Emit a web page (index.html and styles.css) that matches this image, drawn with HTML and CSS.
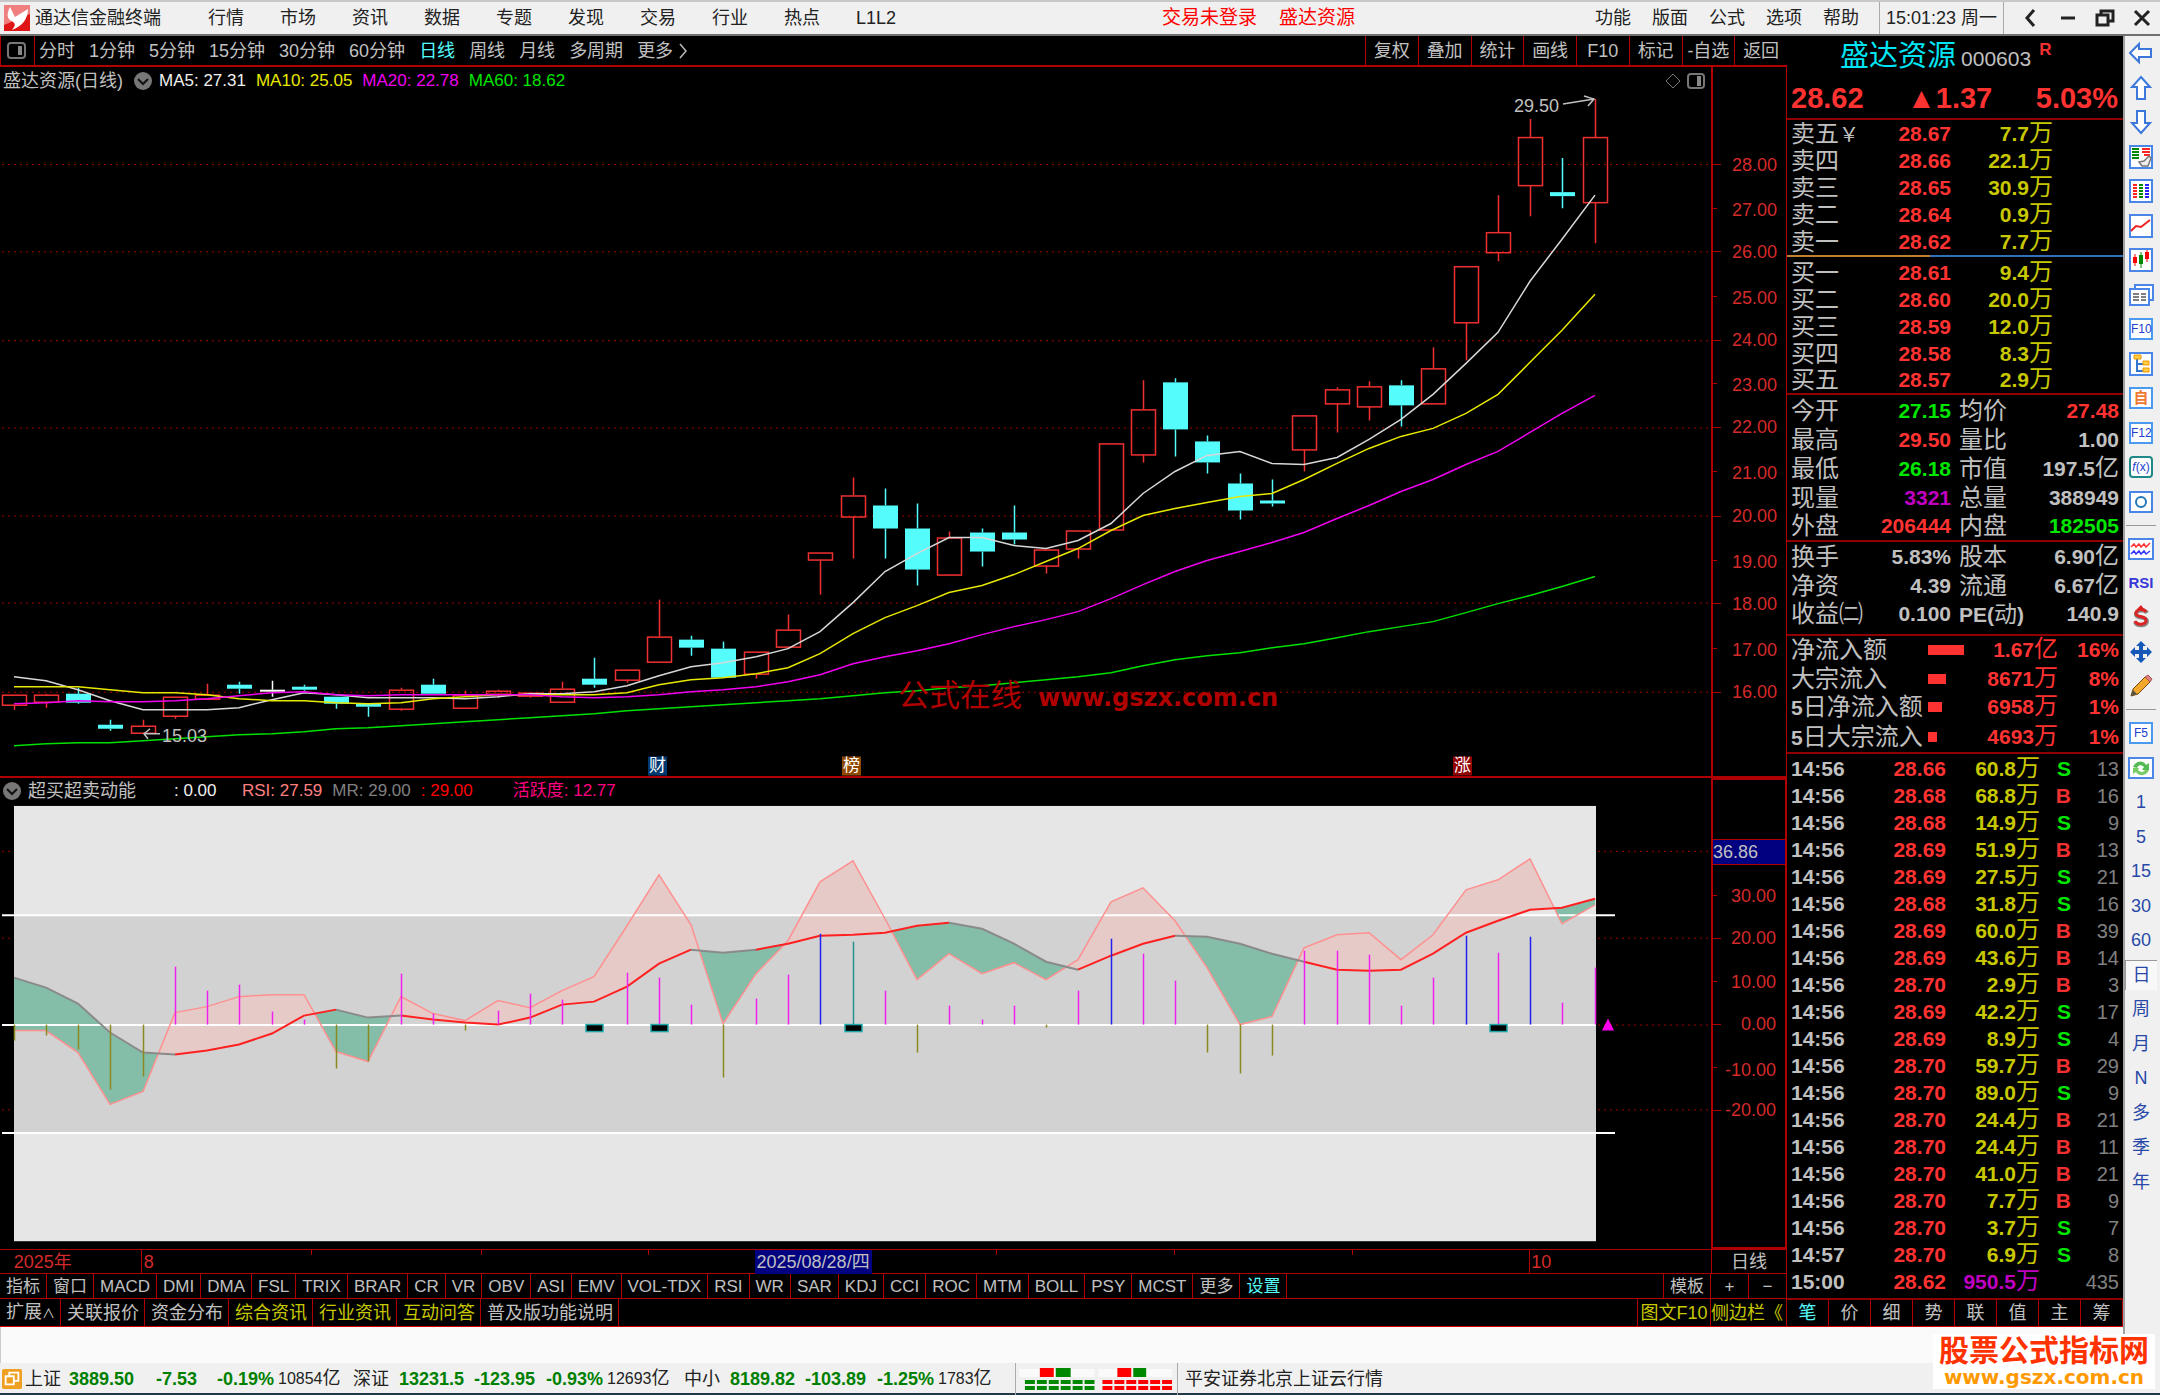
FILE: index.html
```html
<!DOCTYPE html>
<html lang="zh-CN">
<head>
<meta charset="utf-8">
<title>通达信金融终端</title>
<link rel="stylesheet" href="styles.css">
</head>
<body>
<div class="app">
  <header class="titlebar">
    <svg class="logo" viewBox="0 0 26 26"><rect width="26" height="26" fill="#e01515"/><path d="M0 0H26V9L0 20Z" fill="#f08080"/><path d="M6 2L11 12L24 4C24 13 19 21 8 25C12 20 12 18 6 15C2 12 4 6 6 2Z" fill="#fff"/></svg>
    <span class="app-name">通达信金融终端</span>
    <nav class="menu">
      <button>行情</button><button>市场</button><button>资讯</button><button>数据</button><button>专题</button><button>发现</button><button>交易</button><button>行业</button><button>热点</button><button>L1L2</button>
    </nav>
    <div class="account"><a href="#login">交易未登录</a><a href="#stock">盛达资源</a></div>
    <nav class="menu menu-right">
      <button>功能</button><button>版面</button><button>公式</button><button>选项</button><button>帮助</button>
    </nav>
    <time class="clock">15:01:23 周一</time>
    <div class="win">
      <button aria-label="返回"><svg viewBox="0 0 20 20"><path d="M13 2L6 10L13 18"/></svg></button>
      <button aria-label="最小化"><svg viewBox="0 0 20 20"><path d="M3 10H17"/></svg></button>
      <button aria-label="还原"><svg viewBox="0 0 20 20"><path d="M2 7H13V17H2ZM6 7V3H18V13H13"/></svg></button>
      <button aria-label="关闭"><svg viewBox="0 0 20 20"><path d="M3 3L17 17M17 3L3 17"/></svg></button>
    </div>
  </header>

  <main class="workspace">
    <div class="toolbar">
      <button class="layout-btn" aria-label="布局"><svg viewBox="0 0 20 18"><rect x="1" y="1" width="17" height="15" rx="3" fill="none" stroke="#777" stroke-width="2"/><rect x="11" y="4" width="4" height="9" fill="#888"/></svg></button>
      <div class="periods">
        <button>分时</button><button>1分钟</button><button>5分钟</button><button>15分钟</button><button>30分钟</button><button>60分钟</button><button class="on">日线</button><button>周线</button><button>月线</button><button>多周期</button><button class="more">更多<svg viewBox="0 0 10 16"><path d="M2 1L8 8L2 15" fill="none" stroke="#bbb" stroke-width="1.5"/></svg></button>
      </div>
      <div class="tools">
        <button>复权</button><button>叠加</button><button>统计</button><button>画线</button><button>F10</button><button>标记</button><button>-自选</button><button>返回</button>
      </div>
    </div>

    <section class="pane price">
      <div class="plot">
        <svg id="price" viewBox="0 67 1711 708" preserveAspectRatio="none"></svg>
        <div class="legend">
          <span class="name">盛达资源(日线)</span>
          <svg class="drop" viewBox="0 0 20 20"><circle cx="10" cy="10" r="9" fill="#777"/><path d="M5 8L10 13L15 8" fill="none" stroke="#111" stroke-width="2"/></svg>
          <span class="c-white">MA5: 27.31</span><span class="c-yellow">MA10: 25.05</span><span class="c-mag">MA20: 22.78</span><span class="c-green">MA60: 18.62</span>
          <svg class="corner" viewBox="0 0 42 18"><path d="M1 9L8 2L15 9L8 16Z" fill="none" stroke="#777"/><rect x="23" y="2" width="16" height="14" rx="3" fill="none" stroke="#777" stroke-width="2"/><rect x="32" y="4" width="4" height="10" fill="#888"/></svg>
        </div>
        <div id="price-notes"></div>
      </div>
      <div class="axis" id="price-axis"></div>
    </section>

    <section class="pane indicator">
      <div class="plot">
        <svg id="indicator" viewBox="0 777 1711 472" preserveAspectRatio="none"></svg>
        <div class="legend">
          <svg class="drop" viewBox="0 0 20 20"><circle cx="10" cy="10" r="9" fill="#777"/><path d="M5 8L10 13L15 8" fill="none" stroke="#111" stroke-width="2"/></svg>
          <span class="name ind-name">超买超卖动能</span><span class="c-white ind-zero">: 0.00</span><span class="c-pink">RSI: 27.59</span><span class="c-gray">MR: 29.00</span><span class="c-red ind-mr">: 29.00</span><span class="c-rose">活跃度: 12.77</span>
        </div>
      </div>
      <div class="axis framed" id="indicator-axis"></div>
    </section>

    <div class="dates">
      <div class="date-line">
        <svg viewBox="0 0 1711 24" preserveAspectRatio="none"><path d="M141.500 0V24M1529.500 0V24M311.500 0V5M481.500 0V5M648.500 0V5M996.500 0V5M1174.500 0V5M1352.500 0V5" stroke="#b00000"/></svg>
        <span style="left:0.8%">2025年</span><span style="left:8.400%">8</span><span class="cursor-date" style="left:44.100%">2025/08/28/四</span><span style="left:89.500%">10</span>
      </div>
      <div class="date-period">日线</div>
    </div>

    <div class="tabs inds">
      <button>指标</button><button>窗口</button><button>MACD</button><button>DMI</button><button>DMA</button><button>FSL</button><button>TRIX</button><button>BRAR</button><button>CR</button><button>VR</button><button>OBV</button><button>ASI</button><button>EMV</button><button>VOL-TDX</button><button>RSI</button><button>WR</button><button>SAR</button><button>KDJ</button><button>CCI</button><button>ROC</button><button>MTM</button><button>BOLL</button><button>PSY</button><button>MCST</button><button>更多</button><button class="on">设置</button>
      <span class="fill"></span>
      <button class="first">模板</button><button class="half">+</button><button class="half last">−</button>
    </div>
    <div class="tabs exts">
      <button>扩展<small>∧</small></button><button>关联报价</button><button>资金分布</button><button class="y">综合资讯</button><button class="y">行业资讯</button><button class="y">互动问答</button><button>普及版功能说明</button>
      <span class="fill"></span>
      <button class="first y f10">图文F10</button><button class="y side">侧边栏《</button>
    </div>
  </main>

  <aside class="quote">
    <div class="q-head">
      <h1>盛达资源 <small>000603</small><sup>R</sup></h1>
      <div class="q-price"><span>28.62</span><span>▲1.37</span><span>5.03%</span></div>
    </div>
    <table class="book asks">
      <tr><th>卖五<i>￥</i></th><td>28.67</td><td>7.7<b>万</b></td></tr>
      <tr><th>卖四</th><td>28.66</td><td>22.1<b>万</b></td></tr>
      <tr><th>卖三</th><td>28.65</td><td>30.9<b>万</b></td></tr>
      <tr><th>卖二</th><td>28.64</td><td>0.9<b>万</b></td></tr>
      <tr><th>卖一</th><td>28.62</td><td>7.7<b>万</b></td></tr>
    </table>
    <div class="ratio"></div>
    <table class="book bids">
      <tr><th>买一</th><td>28.61</td><td>9.4<b>万</b></td></tr>
      <tr><th>买二</th><td>28.60</td><td>20.0<b>万</b></td></tr>
      <tr><th>买三</th><td>28.59</td><td>12.0<b>万</b></td></tr>
      <tr><th>买四</th><td>28.58</td><td>8.3<b>万</b></td></tr>
      <tr><th>买五</th><td>28.57</td><td>2.9<b>万</b></td></tr>
    </table>
    <table class="stats s5">
      <tr><th>今开</th><td class="g">27.15</td><th>均价</th><td class="r">27.48</td></tr>
      <tr><th>最高</th><td class="r">29.50</td><th>量比</th><td>1.00</td></tr>
      <tr><th>最低</th><td class="g">26.18</td><th>市值</th><td>197.5<b>亿</b></td></tr>
      <tr><th>现量</th><td class="m">3321</td><th>总量</th><td>388949</td></tr>
      <tr><th>外盘</th><td class="r">206444</td><th>内盘</th><td class="g">182505</td></tr>
    </table>
    <table class="stats s3">
      <tr><th>换手</th><td>5.83%</td><th>股本</th><td>6.90<b>亿</b></td></tr>
      <tr><th>净资</th><td>4.39</td><th>流通</th><td>6.67<b>亿</b></td></tr>
      <tr><th>收益㈡</th><td>0.100</td><th class="pe"><span>PE(</span>动<span>)</span></th><td>140.9</td></tr>
    </table>
    <table class="flow">
      <tr><th>净流入额</th><td><span class="bar" style="width:36px"></span></td><td>1.67<b>亿</b></td><td>16%</td></tr>
      <tr><th>大宗流入</th><td><span class="bar" style="width:18px"></span></td><td>8671<b>万</b></td><td>8%</td></tr>
      <tr><th><span>5</span>日净流入额</th><td><span class="bar" style="width:14px"></span></td><td>6958<b>万</b></td><td>1%</td></tr>
      <tr><th><span>5</span>日大宗流入</th><td><span class="bar" style="width:9px"></span></td><td>4693<b>万</b></td><td>1%</td></tr>
    </table>
    <table class="ticks">
      <tr><td>14:56</td><td>28.66</td><td>60.8<b>万</b></td><td class="s">S</td><td>13</td></tr>
      <tr><td>14:56</td><td>28.68</td><td>68.8<b>万</b></td><td>B</td><td>16</td></tr>
      <tr><td>14:56</td><td>28.68</td><td>14.9<b>万</b></td><td class="s">S</td><td>9</td></tr>
      <tr><td>14:56</td><td>28.69</td><td>51.9<b>万</b></td><td>B</td><td>13</td></tr>
      <tr><td>14:56</td><td>28.69</td><td>27.5<b>万</b></td><td class="s">S</td><td>21</td></tr>
      <tr><td>14:56</td><td>28.68</td><td>31.8<b>万</b></td><td class="s">S</td><td>16</td></tr>
      <tr><td>14:56</td><td>28.69</td><td>60.0<b>万</b></td><td>B</td><td>39</td></tr>
      <tr><td>14:56</td><td>28.69</td><td>43.6<b>万</b></td><td>B</td><td>14</td></tr>
      <tr><td>14:56</td><td>28.70</td><td>2.9<b>万</b></td><td>B</td><td>3</td></tr>
      <tr><td>14:56</td><td>28.69</td><td>42.2<b>万</b></td><td class="s">S</td><td>17</td></tr>
      <tr><td>14:56</td><td>28.69</td><td>8.9<b>万</b></td><td class="s">S</td><td>4</td></tr>
      <tr><td>14:56</td><td>28.70</td><td>59.7<b>万</b></td><td>B</td><td>29</td></tr>
      <tr><td>14:56</td><td>28.70</td><td>89.0<b>万</b></td><td class="s">S</td><td>9</td></tr>
      <tr><td>14:56</td><td>28.70</td><td>24.4<b>万</b></td><td>B</td><td>21</td></tr>
      <tr><td>14:56</td><td>28.70</td><td>24.4<b>万</b></td><td>B</td><td>11</td></tr>
      <tr><td>14:56</td><td>28.70</td><td>41.0<b>万</b></td><td>B</td><td>21</td></tr>
      <tr><td>14:56</td><td>28.70</td><td>7.7<b>万</b></td><td>B</td><td>9</td></tr>
      <tr><td>14:56</td><td>28.70</td><td>3.7<b>万</b></td><td class="s">S</td><td>7</td></tr>
      <tr><td>14:57</td><td>28.70</td><td>6.9<b>万</b></td><td class="s">S</td><td>8</td></tr>
      <tr><td>15:00</td><td>28.62</td><td class="m">950.5<b>万</b></td><td></td><td>435</td></tr>
    </table>
    <nav class="q-tabs"><button class="on">笔</button><button>价</button><button>细</button><button>势</button><button>联</button><button>值</button><button>主</button><button>筹</button></nav>
  </aside>

  <aside class="rail">
    <div class="rail-top">
      <button aria-label="后退"><svg viewBox="0 0 26 26"><path class="arrow" d="M2 13L11 4V9H23V17H11V22Z"/></svg></button>
      <button aria-label="上移"><svg viewBox="0 0 26 26"><path class="arrow" d="M13 2L22 12H17V24H9V12H4Z"/></svg></button>
      <button aria-label="下移"><svg viewBox="0 0 26 26"><path class="arrow" d="M13 24L22 14H17V2H9V14H4Z"/></svg></button>
      <button aria-label="委托"><svg viewBox="0 0 26 26"><rect class="box" x="2" y="2" width="22" height="22"/><path d="M4 5H11M4 8H11M4 11H11M4 14H11" stroke="#080" stroke-width="2"/><path d="M14 5H22M14 8H22M16 11H22" stroke="#f22" stroke-width="2"/><path d="M11 18L14 22H20L23 14L21 12L18 15L16 17Z" fill="#eee" stroke="#777" stroke-width="1.5"/></svg></button>
      <button aria-label="列表"><svg viewBox="0 0 26 26"><rect class="box" x="2" y="2" width="22" height="22"/><g stroke-width="4" stroke-dasharray="2 1"><path d="M7 6V21" stroke="#f22"/><path d="M13 6V21" stroke="#080"/><path d="M19 6V21" stroke="#22f"/></g></svg></button>
      <button aria-label="分时"><svg viewBox="0 0 26 26"><rect class="box" x="2" y="2" width="22" height="22"/><path d="M3 18L8 13L13 14L22 7" fill="none" stroke="#e22" stroke-width="2"/></svg></button>
      <button aria-label="K线"><svg viewBox="0 0 26 26"><rect class="box" x="2" y="2" width="22" height="22"/><path d="M7 7V19M19 3V15" stroke="#f00"/><path d="M13 5V21" stroke="#080"/><path d="M5 10H9V16H5ZM17 5H21V12H17Z" fill="#f00"/><path d="M11 8H15V17H11Z" fill="#080"/></svg></button>
      <button aria-label="资讯"><svg viewBox="0 0 26 26"><path class="box" d="M7 3H25V18H7Z"/><path class="box" d="M2 7H21V23H2Z"/><path d="M5 12H11M5 15H11M5 18H11M13 12H18M13 15H18M13 18H18" stroke="#555" stroke-width="1.500"/></svg></button>
      <button class="key">F10</button>
      <button aria-label="板块"><svg viewBox="0 0 26 26"><rect class="box" x="2" y="2" width="22" height="22"/><path d="M9 8V20H15M9 13H15" fill="none" stroke="#37c" stroke-width="2"/><path d="M6 4H13V8H6ZM15 10H21V14H15ZM15 17H21V21H15Z" fill="#fc4" stroke="#e90"/></svg></button>
      <button class="key own">自</button>
      <button class="key">F12</button>
      <button class="key fx"><em>f</em>(x)</button>
      <button aria-label="选项"><svg viewBox="0 0 26 26"><rect class="box" x="2" y="3" width="22" height="20"/><circle cx="13" cy="13" r="5" fill="none" stroke="#27b" stroke-width="2"/></svg></button>
    </div>
    <hr>
    <div class="rail-mid">
      <button aria-label="叠加"><svg viewBox="0 0 26 26"><rect class="box" x="1" y="3" width="24" height="20"/><g fill="none" stroke-width="1.500"><path d="M3 11L6 8L8 11L11 8L13 11L16 8L18 11L22 7" stroke="#f33"/><path d="M3 18L6 15L8 18L11 15L13 18L16 15L18 18L22 15" stroke="#33f"/></g></svg></button>
      <button class="rsi">RSI</button>
      <button aria-label="资金"><svg viewBox="0 0 26 26"><path d="M19 9C17 5 7 6 8 11C9 15 18 12 19 17C20 22 9 23 7 18M13 3V6" fill="none" stroke="#888" stroke-width="4"/><path d="M18 8C16 4 7 5 8 10C9 14 17 11 18 16C19 21 9 22 7 17" fill="none" stroke="#d22" stroke-width="3"/><path d="M9 5L13 1L16 5Z" fill="#d22"/></svg></button>
      <button aria-label="移动"><svg viewBox="0 0 26 26"><path d="M13 2L18 7H15V11H19V8L24 13L19 18V15H15V19H18L13 24L8 19H11V15H7V18L2 13L7 8V11H11V7H8Z" fill="#1558b8"/></svg></button>
      <button aria-label="画笔"><svg viewBox="0 0 26 26"><path d="M3 23L5 16L17 4L22 9L10 21Z" fill="#f3a82a" stroke="#7a4a10"/><path d="M17 4L20 2L24 6L22 9Z" fill="#e08080" stroke="#a55"/><path d="M3 23L5 17L9 21Z" fill="#554"/></svg></button>
    </div>
    <hr>
    <div class="rail-low">
      <button class="key">F5</button>
      <button aria-label="刷新"><svg viewBox="0 0 26 26"><rect class="box" x="1" y="3" width="24" height="20"/><path d="M5 12C8 5 16 5 18 10L21 8V15H14L16 12C13 9 10 10 9 13Z" fill="#5b5"/><path d="M21 15C18 22 10 21 8 17L5 19V13H11L10 15C13 18 16 17 17 15Z" fill="#7c6"/></svg></button>
      <button>1</button><button>5</button><button>15</button><button>30</button><button>60</button><button class="pressed">日</button><button>周</button><button>月</button><button>N</button><button>多</button><button>季</button><button>年</button>
    </div>
  </aside>

  <div class="dock"></div>

  <footer class="status">
    <svg class="st-icon" viewBox="0 0 22 22"><rect width="22" height="22" rx="2" fill="#f0a020"/><path d="M4 8H13V17H4ZM8 8V4H18V13H13" fill="none" stroke="#fff" stroke-width="2"/></svg>
    <div class="index i1"><span>上证</span><b>3889.50</b><b>-7.53</b><b>-0.19%</b><span class="amt">10854<i>亿</i></span></div>
    <div class="index i2"><span>深证</span><b>13231.5</b><b>-123.95</b><b>-0.93%</b><span class="amt">12693<i>亿</i></span></div>
    <div class="index i2"><span>中小</span><b>8189.82</b><b>-103.89</b><b>-1.25%</b><span class="amt">1783<i>亿</i></span></div>
    <svg class="heat" viewBox="0 0 160 28"><path d="M2 4H78V12H2ZM82 4H156V12H82Z" fill="#fafafa"/><path d="M23 3H37V12H23ZM101 3H115V12H101Z" fill="#f00"/><path d="M39 3H54V12H39ZM117 3H130V12H117Z" fill="#080"/><path d="M8 17H78M8 23H78" stroke="#080" stroke-width="4" stroke-dasharray="10 2"/><path d="M86 17H156M86 23H156" stroke="#f00" stroke-width="4" stroke-dasharray="10 2"/></svg>
    <span class="server">平安证券北京上证云行情</span>
  </footer>

  <a class="brand" href="#site"><strong>股票公式指标网</strong><span>www.gszx.com.cn</span></a>
</div>
<script src="charts.js"></script>
</body>
</html>
```
FILE: styles.css
```css
* { box-sizing: border-box; }
body {
  margin: 0;
  background: #f0f0f0;
  color: #c0c0c0;
  font: 18px/24px "Liberation Sans", "Noto Sans CJK SC", sans-serif;
}
button {
  padding: 0;
  border: 0;
  background: none;
  color: inherit;
  font: inherit;
  white-space: nowrap;
}
a { text-decoration: none; }
svg { display: block; }
.app {
  position: relative;
  display: grid;
  grid-template: 36px minmax(1291px, 1fr) 36px 32px / minmax(0, 1fr) 336px 37px;
  min-height: 100vh;
}

.titlebar {
  grid-column: 1 / -1;
  display: flex;
  align-items: center;
  padding: 0 8px 1px 4px;
  border-top: 2px solid #c8c8c8;
  border-bottom: 2px solid #707070;
  background: #f0f0f0;
  color: #222;
}
.logo { width: 26px; height: 26px; margin-right: 5px; }
.menu { display: flex; gap: 36px; margin-left: 47px; }
.menu-right { gap: 21px; margin: 0 20px 0 0; }
.account { display: flex; gap: 22px; margin: 0 auto 0 266px; font-size: 19px; }
.account a { color: #f00; }
.clock {
  width: 125px;
  border: solid #aaa;
  border-width: 0 1px;
  text-align: center;
  line-height: 32px;
}
.win { display: flex; gap: 17px; margin-left: 17px; }
.win svg { width: 20px; height: 20px; fill: none; stroke: #222; stroke-width: 3; }

.workspace {
  display: flex;
  flex-direction: column;
  background: #000;
  border-bottom: 1px solid #d00000;
}
.toolbar {
  display: flex;
  height: 31px;
  border-bottom: 2px solid #b00000;
}
.layout-btn {
  width: 35px;
  padding-left: 6px;
  border: solid #b00000;
  border-width: 0 1px;
}
.layout-btn svg { width: 20px; height: 18px; }
.periods { display: flex; gap: 14px; margin-left: 4px; }
.more { display: flex; align-items: center; gap: 5px; }
.more svg { width: 10px; height: 16px; }
.on, .tabs .on { color: #54fcfc; }
.tools {
  display: grid;
  grid-template-columns: repeat(8, 1fr);
  width: 422px;
  margin-left: auto;
}
.tools button { border-left: 1px solid #b00000; }

.pane { display: grid; grid-template-columns: minmax(0, 1fr) 76px; }
.price { flex: 710 1 0; border-bottom: 2px solid #b00000; }
.indicator { flex: 472 1 0; }
.plot { position: relative; }
.plot > svg { position: absolute; inset: 0; width: 100%; height: 100%; }
.legend {
  position: relative;
  display: flex;
  align-items: center;
  gap: 10px;
  height: 28px;
  padding-left: 3px;
  font-size: 17px;
}
.indicator .legend { height: 26px; padding-left: 2px; }
.legend span { white-space: nowrap; }
.legend .name { font-size: 18px; }
.drop { width: 20px; height: 20px; margin-right: -4px; }
.corner { width: 42px; height: 18px; margin: 0 4px 0 auto; }
.ind-name { width: 136px; }
.ind-zero { width: 58px; }
.ind-mr { width: 82px; }
.c-white { color: #f0f0f0; }
.c-yellow { color: #e8e800; }
.c-mag { color: #f000f0; }
.c-green { color: #00e600; }
.c-pink { color: #ff8080; }
.c-gray { color: #808080; }
.c-red { color: #f00; }
.c-rose { color: #ff0080; }
.note, .badge, .mark { position: absolute; white-space: nowrap; transform: translateY(-50%); }
.badge { width: 19px; height: 19px; color: #fff; font-size: 17px; line-height: 18px; text-align: center; }
.mark { color: #b00000; font-size: 31px; line-height: 40px; }
.mark b { margin-left: 16px; font-family: "DejaVu Sans", sans-serif; font-size: 24px; }
.axis { position: relative; border: solid #b00000; border-width: 0 1px 0 2px; color: #d42a2a; }
.framed { border-width: 2px; }
.axis span { position: absolute; right: 9px; transform: translateY(-50%); }
.axis i { position: absolute; left: 0; height: 1px; background: #b00000; }
.axis .current {
  left: 0;
  right: 0;
  border: solid #b00000;
  border-width: 1px 0;
  background: #000080;
  color: #c0c0c0;
}

.dates { display: grid; grid-template-columns: minmax(0, 1fr) 76px; height: 24px; border-top: 1px solid #b00000; }
.date-line { position: relative; color: #d42a2a; }
.date-line svg { width: 100%; height: 100%; }
.date-line span { position: absolute; top: 0; line-height: 24px; }
.date-line .cursor-date { padding: 0 2px; background: #000080; color: #c0c0c0; }
.date-period { border: solid #b00000; border-width: 0 1px; text-align: center; }
.tabs { display: flex; height: 25px; border-top: 1px solid #b00000; font-size: 17px; }
.tabs button { padding: 1px 6px 0; border-right: 1px solid #b00000; }
.tabs .fill { flex: 1; }
.tabs .first { border-left: 1px solid #b00000; }
.tabs .half { width: 38px; }
.exts { height: 28px; font-size: 18px; }
.exts button { padding: 1px 5px 0 6px; }
.exts small { font-size: 13px; }
.exts .y { color: #c8c800; }
.exts .f10 { width: 74px; padding: 0; }
.exts .side { width: 76px; padding: 0; overflow: hidden; text-align: left; }

.quote {
  display: flex;
  flex-direction: column;
  background: #000;
  border-bottom: 1px solid #d00000;
  font-size: 21px;
}
.q-head { height: 84px; border-bottom: 2px solid #900000; }
.q-head h1 { margin: 0; height: 42px; padding-left: 53px; color: #00e5f5; font-size: 29px; line-height: 40px; font-weight: 400; }
.q-head small { margin-left: -3px; color: #c0c0c0; font-size: 21px; }
.q-head sup { margin-left: 8px; color: #f03030; font-size: 17px; line-height: 0; font-weight: 700; }
.q-price { display: flex; justify-content: space-between; padding: 0 5px 0 4px; color: #ff3232; font-size: 29px; line-height: 40px; font-weight: 700; }
table { width: 100%; table-layout: fixed; border-collapse: collapse; line-height: 24px; }
th { padding: 0 0 0 4px; font-size: 24px; font-weight: 400; text-align: left; white-space: nowrap; }
td { padding: 0; font-weight: 700; text-align: right; white-space: nowrap; }
td b, td i { font-size: 24px; line-height: 0; font-weight: 400; font-style: normal; }
th i { font-style: normal; font-size: 20px; line-height: 0; }
.book td { height: 27px; color: #ff3232; }
.book td:nth-child(2) { width: 84px; }
.book td:nth-child(3) { width: 102px; color: #c8c800; }
.book th { width: 80px; }
.book td:last-child { width: 172px; padding-right: 70px; }
.ratio { height: 2px; background: linear-gradient(90deg, #c08030 42.600%, #3070b8 0); }
.bids { border-bottom: 2px solid #900000; margin-top: 2px; }
.stats td { height: 28px; }
.stats th:first-child { width: 80px; }
.stats td:nth-child(2) { width: 84px; }
.stats th:nth-child(3) { width: 80px; padding-left: 8px; }
.stats td:last-child { padding-right: 4px; }
.s5 { margin-top: 1px; }
.s5 td, .s5 th { height: 29px; }
.s5, .s3, .flow { border-bottom: 2px solid #900000; }
.s3 td { height: 29px; }
.s3 { height: 93px; }
.s3 tr:last-child td { height: 35px; padding-bottom: 6px; }
.s3 tr:last-child th { padding-bottom: 6px; }
.pe { font-size: 23px; }
.pe span, .flow th span { font-size: 21px; font-weight: 700; }
.flow { height: 118px; color: #ff3232; }
.flow th { width: 141px; color: #c0c0c0; }
.flow td:nth-child(2) { width: 37px; }
.flow td:nth-child(3) { width: 93px; }
.flow td:last-child { padding-right: 4px; }
.bar { display: block; height: 10px; background: #ff3232; }
.g { color: #00e600; }
.r { color: #ff3232; }
.m, .ticks td.m { color: #c000c0; }
.ticks { margin-top: 1px; }
.ticks td { height: 27px; color: #c8c800; }
.ticks td:nth-child(1) { width: 58px; padding-left: 4px; color: #c0c0c0; text-align: left; }
.ticks td:nth-child(2) { width: 101px; color: #ff3232; }
.ticks td:nth-child(3) { width: 94px; }
.ticks td:nth-child(4) { width: 31px; color: #f03030; }
.ticks td.s:nth-child(4) { color: #00e600; }
.ticks td:nth-child(5) { padding-right: 4px; color: #808080; font-size: 20px; font-weight: 400; }
.q-tabs { display: grid; grid-template-columns: repeat(8, 1fr); margin-top: auto; height: 28px; border-top: 2px solid #900000; font-size: 18px; }
.q-tabs button { border-right: 1px solid #b00000; }

.rail {
  grid-row: 2 / 4;
  grid-column: 3;
  padding-right: 3px;
  border-left: 2px solid #a0a0a0;
  background: #f0f0f0;
  color: #2848a8;
}
.rail div { display: grid; grid-auto-rows: 1fr; height: 483px; justify-items: center; align-items: center; }
.rail .rail-mid { height: 171px; }
.rail svg { width: 26px; height: 26px; }
.rail hr { width: 30px; height: 1px; margin: 6px auto; border: 0; background: #999; }
.arrow { fill: #fff; stroke: #3c78dc; stroke-width: 2; }
.box { fill: #fff; stroke: #4a86e8; stroke-width: 2; }
.key { width: 24px; height: 22px; border: 2px solid #4a9af0; background: #fff; color: #2040d0; font-size: 12px; line-height: 18px; }
.own { color: #f07830; font-size: 15px; font-weight: 700; }
.fx { border-color: #208888; border-radius: 4px; font-size: 12px; }
.rsi { color: #3838d8; font-size: 15px; font-weight: 700; }
.rail .pressed { width: 32px; height: 30px; border: solid #999; border-width: 1px 0 0 1px; background: #f8f8f8; }

.dock { grid-column: 1 / 3; background: #fafafa; border-left: 1px solid #ccc; }
.status {
  grid-column: 1 / -1;
  display: flex;
  align-items: center;
  padding: 2px 0 0 2px;
  border-bottom: 2px solid #203848;
  background: #f0f0f0;
  color: #222;
  white-space: nowrap;
}
.st-icon { width: 20px; height: 22px; margin-right: 3px; }
.index { display: grid; grid-template-columns: 37px 76px 63px 77px 75px; align-items: center; }
.index b { color: #008000; text-align: right; padding-right: 4px; }
.amt { font-size: 16px; }
.amt i { font-size: 18px; line-height: 0; font-style: normal; }
.i2 { grid-template-columns: 37px 78px 71px 68px 77px; }
.heat { width: 163px; height: 32px; padding: 0 1px; border: solid #aaa; border-width: 0 1px; }
.server { margin-left: 7px; }
.brand {
  position: absolute;
  right: 5px;
  bottom: 6px;
  width: 222px;
  height: 55px;
  background: #fff;
  text-align: center;
}
.brand strong { display: block; color: #ff3300; font-size: 30px; line-height: 34px; }
.brand span { display: block; color: #ff9900; font: bold 20px/18px "DejaVu Sans", sans-serif; }
```
FILE: charts.js
```js
const STEP = 32.27, X0 = 14, RIGHT = 1711;
const x = i => Math.floor(X0 + i * STEP);

// body top, body bottom, wick top, wick bottom, kind (r = rise, f = fall, d = doji)
const candles = [
  [694,704,694,709,'r'],[694,701,693,707,'r'],[693,702,687,703,'f'],[724,728,719,730,'f'],[725,732,719,733,'r'],
  [696,715,696,718,'r'],[694,698,683,698,'r'],[684,688,681,693,'f'],[689,691,680,696,'d'],[686,689,684,690,'f'],
  [696,703,696,708,'f'],[703,706,703,716,'f'],[689,708,687,710,'r'],[684,693,678,693,'f'],[694,707,690,707,'r'],
  [690,693,689,697,'r'],[692,695,692,697,'r'],[688,701,681,701,'r'],[678,684,657,687,'f'],[669,679,669,682,'r'],
  [636,661,599,661,'r'],[639,647,635,655,'f'],[648,677,641,677,'f'],[651,673,651,678,'r'],[629,646,614,648,'r'],
  [552,559,552,594,'r'],[495,516,477,558,'r'],[505,528,488,558,'f'],[528,569,503,585,'f'],[537,574,531,574,'r'],
  [532,551,528,566,'f'],[532,539,505,544,'f'],[549,565,549,573,'r'],[530,548,530,558,'r'],[443,529,443,529,'r'],
  [409,454,380,462,'r'],[382,429,378,456,'f'],[441,462,435,473,'f'],[483,510,473,519,'f'],[500,503,479,506,'f'],
  [415,449,415,471,'r'],[389,403,387,432,'r'],[386,406,381,420,'r'],[385,405,380,426,'f'],[368,403,347,403,'r'],
  [266,322,266,360,'r'],[232,252,195,261,'r'],[137,185,119,216,'r'],[192,196,158,208,'f'],[137,202,99,243,'r']
];
const averages = {
  '#d8d8d8': [676,680,689,700,709,709,709,707,699,692,694,697,697,697,698,696,693,693,691,685,675,666,662,656,648,631,602,571,553,537,537,545,548,540,523,493,471,455,451,463,464,457,439,419,394,363,332,281,239,195],
  '#e8e800': [686,686,686,689,692,692,694,698,700,700,702,703,702,698,696,694,694,694,694,692,684,679,677,673,667,653,633,617,605,592,585,574,561,548,530,515,508,502,496,493,479,463,448,436,428,413,394,362,330,294],
  '#f000f0': [703,702,700,701,701,700,698,695,692,691,694,695,694,694,694,694,694,696,697,696,694,691,689,686,681,674,663,656,650,643,634,626,619,611,598,584,571,560,551,542,532,518,505,491,479,464,451,432,413,395],
  '#00e000': [745,743,742,742,740,738,736,734,733,731,728,727,725,723,721,719,717,715,713,710,708,706,704,702,700,698,695,692,690,687,685,682,679,676,672,665,659,655,652,647,643,637,631,626,621,612,603,595,586,576]
};
const line = (ys, color, w, from = 0) =>
  `<polyline fill="none" stroke="${color}" stroke-width="${w}" points="${ys.map((y, i) => x(from + i) + ',' + y).join(' ')}"/>`;
const dotted = (y, a, b) => `<path d="M${a} ${y}.500H${b}" stroke="#a00000" stroke-dasharray="2 4"/>`;

let out = [164,251,340,427,515,602,691].map(y => dotted(y, 2, RIGHT)).join('');
candles.forEach(([t, b, h, l, k], i) => {
  const c = x(i) + 0.5, color = { r: '#f03030', f: '#54fcfc', d: '#ffffff' }[k];
  out += `<path d="M${c} ${h}V${t}M${c} ${b}V${l}" stroke="${color}" stroke-width="1.500"/>`;
  out += k === 'r'
    ? `<rect x="${c - 12}" y="${t + 0.5}" width="24" height="${b - t}" fill="none" stroke="${color}" stroke-width="1.500"/>`
    : `<rect x="${c - 12.5}" y="${t}" width="25" height="${b - t}" fill="${color}"/>`;
});
for (const color in averages) out += line(averages[color], color, 1.5);
out += '<path d="M1563 104L1594 99M1584 96L1594 99L1588 106M160 733H144M150 728L144 733L148 738" fill="none" stroke="#c0c0c0" stroke-width="1.500"/>';
document.getElementById('price').innerHTML = out;

const at = (px, py) => `left:${(px / 17.11).toFixed(2)}%;top:${((py - 67) / 7.08).toFixed(2)}%`;
document.getElementById('price-notes').innerHTML =
  `<span class="note" style="${at(1514, 106)}">29.50</span>` +
  `<span class="note" style="${at(162, 735)}">15.03</span>` +
  `<span class="badge" style="${at(648, 765)};background:#003870">财</span>` +
  `<span class="badge" style="${at(842, 765)};background:#904800">榜</span>` +
  `<span class="badge" style="${at(1453, 765)};background:#900000">涨</span>` +
  `<span class="mark" style="${at(898, 696)}">公式在线<b>www.gszx.com.cn</b></span>`;

const axis = (rows, top, height) => rows.map(([text, y, tick, wide]) =>
  `<span style="top:${((y - top) / height * 100).toFixed(2)}%">${text}</span>` +
  `<i style="top:${((tick - top) / height * 100).toFixed(2)}%;width:${wide ? 8 : 4}px"></i>`).join('');
document.getElementById('price-axis').innerHTML = axis([
  ['28.00',165,164,1],['27.00',210,208,0],['26.00',252,251,1],['25.00',298,296,0],['24.00',340,340,1],['23.00',385,383,0],
  ['22.00',427,427,1],['21.00',473,471,0],['20.00',515,515,1],['19.00',561,559,0],['18.00',603,602,1],['17.00',649,647,0],['16.00',691,691,1]
], 67, 708);
document.getElementById('indicator-axis').innerHTML = axis([
  ['30.00',895,894,0],['20.00',937,937,1],['10.00',982,981,0],['0.00',1024,1024,1],['-10.00',1070,1067,0],['-20.00',1110,1110,1]
], 779, 468) + '<span class="current" style="top:15.400%">36.86</span>';

const rsi = [1030,1030,1052,1104,1091,1012,1006,996,994,994,1051,1061,996,1013,1020,1000,1007,990,976,925,874,924,1023,973,940,881,860,918,979,953,973,962,979,959,901,887,920,967,1024,1016,947,934,932,959,934,889,879,858,923,904];
const mr = [977,987,1003,1032,1052,1054,1050,1044,1033,1015,1009,1017,1015,1019,1022,1024,1017,1004,1001,986,963,949,952,949,943,935,934,932,925,922,928,943,961,969,955,943,935,936,943,953,961,969,970,969,953,932,920,909,907,898];
const mrRuns = [[0,5,0],[5,10,1],[10,12,0],[12,21,1],[21,23,0],[23,29,1],[29,33,0],[33,36,1],[36,40,0],[40,49,1]];
const bars = [1040,1035,1049,1089,1076,966,990,984,1011,1019,1068,1061,973,1013,1030,1010,993,999,1024,972,977,1004,1077,998,974,933,941,990,1052,1005,1019,1005,1027,990,938,953,980,1052,1073,1055,950,950,954,1005,977,935,952,936,1002,967];
const ZERO = 1024;

out = [850,937,1024,1109].map(y => dotted(y, 2, RIGHT)).join('');
out += '<rect x="14" y="805" width="1582" height="436" fill="#e6e6e6"/><rect x="14" y="914" width="1582" height="218" fill="#d2d2d2"/>';
const PINK = '#e6cac8', GREEN = '#84bea9';
for (let i = 0; i < 49; i++) {
  const a = x(i), b = x(i + 1), d0 = mr[i] - rsi[i], d1 = mr[i + 1] - rsi[i + 1];
  const poly = (pts, d) => `<polygon points="${pts}" fill="${d > 0 ? PINK : GREEN}"/>`;
  if (d0 * d1 < 0) {
    const t = d0 / (d0 - d1), cx = a + t * (b - a), cy = mr[i] + t * (mr[i + 1] - mr[i]);
    out += poly(`${a},${mr[i]} ${a},${rsi[i]} ${cx},${cy}`, d0) + poly(`${b},${mr[i + 1]} ${b},${rsi[i + 1]} ${cx},${cy}`, d1);
  } else {
    out += poly(`${a},${mr[i]} ${a},${rsi[i]} ${b},${rsi[i + 1]} ${b},${mr[i + 1]}`, d0 + d1);
  }
}
out += '<path d="M2 914.500H1615M2 1132.500H1615M2 1024.500H1596" stroke="#ffffff" stroke-width="2"/>';
out += line(rsi, '#ff9090', 1.5);
mrRuns.forEach(([a, b, rising]) => {
  out += line(mr.slice(a, b + 1), rising ? '#ff2020' : '#8a8a8a', 2, a);
});
bars.forEach((y, i) => {
  const color = y > ZERO ? '#8a8a20' : [25,34,45,47].includes(i) ? '#2020f0' : i === 26 ? '#209090' : '#f020f0';
  out += `<path d="M${x(i) + 0.5} ${ZERO}V${y}" stroke="${color}" stroke-width="1.500"/>`;
});
[18,20,26,46].forEach(i => {
  out += `<rect x="${x(i) - 8}" y="1024" width="17" height="7" fill="#000" stroke="#20a8a8" stroke-width="1.500"/>`;
});
out += '<path d="M1608 1018L1614 1030H1602Z" fill="#f0e"/>';
document.getElementById('indicator').innerHTML = out;
```
